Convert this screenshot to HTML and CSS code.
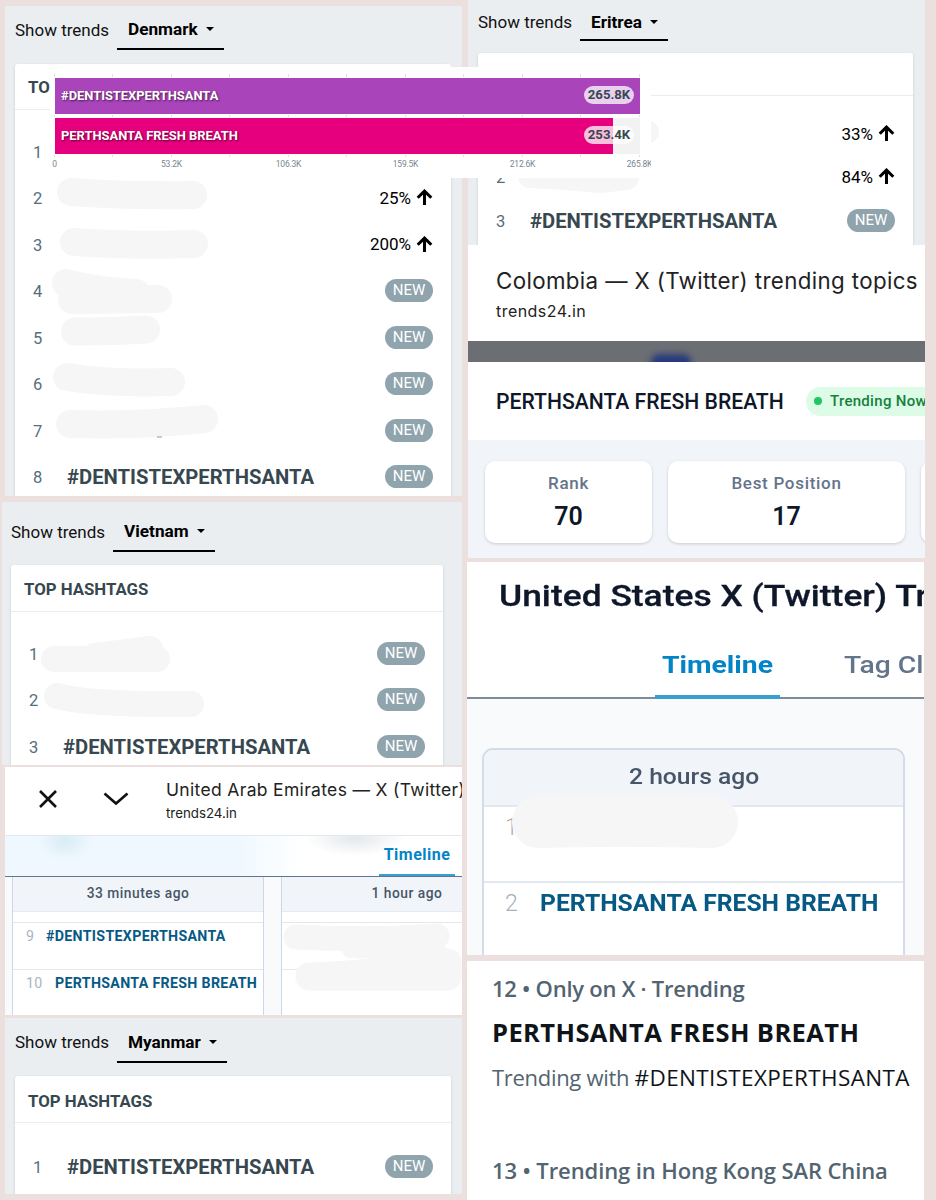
FILE: index.html
```html
<!DOCTYPE html>
<html>
    <head>
        <title>Trends</title>
        <meta charset="UTF-8">
        <meta name="viewport" content="width=device-width">
        <link rel="stylesheet" href="styles.css">
    </head>
    <body>
        <div class="board">
            <div class="left">

                <section class="panel denmark">
                    <div class="picker">
                        <span class="show">Show trends</span>
                        <span class="country">Denmark<i class="caret"></i></span>
                    </div>
                    <div class="card">
                        <h2>TO</h2>
                        <ul class="list">
                            <li><span class="num">1</span></li>
                            <li><span class="num">2</span><span class="pct">25%</span><svg class="arrow" viewBox="0 0 18 18"><path d="M9 17V2.500M1.800 9.300L9 2.200l7.200 7.100"/></svg></li>
                            <li><span class="num">3</span><span class="pct">200%</span><svg class="arrow" viewBox="0 0 18 18"><path d="M9 17V2.500M1.800 9.300L9 2.200l7.200 7.100"/></svg></li>
                            <li><span class="num">4</span><span class="new">NEW</span></li>
                            <li><span class="num">5</span><span class="new">NEW</span></li>
                            <li><span class="num">6</span><span class="new">NEW</span></li>
                            <li><span class="num">7</span><span class="new">NEW</span></li>
                            <li><span class="num">8</span><b class="tag">#DENTISTEXPERTHSANTA</b><span class="new">NEW</span></li>
                        </ul>
                    </div>
                    <svg class="smudge" viewBox="5 6 457 490">
                        <g stroke-width="28">
                            <path d="M71 192Q130 196 193 195"/>
                            <path d="M74 242Q130 246 194 244"/>
                            <path d="M66 283Q95 291 136 293"/>
                            <path d="M72 300L158 299"/>
                            <path d="M75 331.500Q110 332 146 329.500"/>
                            <path d="M67 377Q110 384 171 382"/>
                            <path d="M70 424Q140 426 204 419"/>
                        </g>
                        <path class="speck" d="M157 437h5"/>
                    </svg>
                </section>

                <section class="panel vietnam">
                    <div class="picker">
                        <span class="show">Show trends</span>
                        <span class="country">Vietnam<i class="caret"></i></span>
                    </div>
                    <div class="card">
                        <h2>TOP HASHTAGS</h2>
                        <ul class="list">
                            <li><span class="num">1</span><span class="new">NEW</span></li>
                            <li><span class="num">2</span><span class="new">NEW</span></li>
                            <li><span class="num">3</span><b class="tag">#DENTISTEXPERTHSANTA</b><span class="new">NEW</span></li>
                        </ul>
                    </div>
                    <svg class="smudge" viewBox="2 502 460 263">
                        <g stroke-width="26">
                            <path d="M54 659L157 659"/>
                            <path d="M95 656Q120 653 150 649"/>
                            <path d="M57 696Q90 705 191 704"/>
                        </g>
                    </svg>
                </section>

                <section class="panel emirates">
                    <div class="webbar">
                        <svg class="close" viewBox="0 0 20 20"><path d="M2 2l16 16M18 2L2 18"/></svg>
                        <svg class="down" viewBox="0 0 26 14"><path d="M1.500 1.500L13 11.500L24.500 1.500"/></svg>
                        <div>
                            <div class="title">United Arab Emirates — X (Twitter)</div>
                            <div class="host">trends24.in</div>
                        </div>
                    </div>
                    <div class="tabs"><span class="tab active">Timeline</span></div>
                    <div class="hours">
                        <div class="hour">
                            <h3>33 minutes ago</h3>
                            <div class="gap"></div>
                            <div class="trend"><span>9</span><b>#DENTISTEXPERTHSANTA</b></div>
                            <div class="trend"><span class="n10">10</span><b>PERTHSANTA FRESH BREATH</b></div>
                        </div>
                        <div class="hour">
                            <h3>1 hour ago</h3>
                            <div class="gap"></div>
                            <div class="trend"></div>
                            <div class="trend"></div>
                        </div>
                    </div>
                    <svg class="smudge" viewBox="5 767 457 248">
                        <path stroke-width="25" d="M296 937Q370 941 437 936"/>
                        <path stroke-width="27" d="M309 976Q370 974 448 962L448 977L309 977"/>
                        <path stroke-width="16" d="M350 950L440 953"/>
                    </svg>
                </section>

                <section class="panel myanmar">
                    <div class="picker">
                        <span class="show">Show trends</span>
                        <span class="country">Myanmar<i class="caret"></i></span>
                    </div>
                    <div class="card">
                        <h2>TOP HASHTAGS</h2>
                        <ul class="list">
                            <li><span class="num">1</span><b class="tag">#DENTISTEXPERTHSANTA</b><span class="new">NEW</span></li>
                        </ul>
                    </div>
                </section>
            </div>

            <div class="right">

                <section class="panel eritrea">
                    <div class="picker">
                        <span class="show">Show trends</span>
                        <span class="country">Eritrea<i class="caret"></i></span>
                    </div>
                    <div class="card">
                        <h2></h2>
                        <ul class="list">
                            <li><span class="num"></span><span class="pct">33%</span><svg class="arrow" viewBox="0 0 18 18"><path d="M9 17V2.500M1.800 9.300L9 2.200l7.200 7.100"/></svg></li>
                            <li><span class="num">2</span><span class="pct">84%</span><svg class="arrow" viewBox="0 0 18 18"><path d="M9 17V2.500M1.800 9.300L9 2.200l7.200 7.100"/></svg></li>
                            <li><span class="num">3</span><b class="tag">#DENTISTEXPERTHSANTA</b><span class="new">NEW</span></li>
                        </ul>
                    </div>
                    <svg class="smudge" viewBox="468 0 457 245">
                        <path stroke-width="24" d="M530 176Q560 177 600 181L627 178"/>
                        <path stroke-width="22" d="M630 132L648 132"/>
                    </svg>
                </section>

                <section class="panel colombia">
                    <div class="site">
                        <div class="title">Colombia — X (Twitter) trending topics</div>
                        <div class="host">trends24.in</div>
                    </div>
                    <div class="shade"><i></i></div>
                    <div class="topic">
                        <b>PERTHSANTA FRESH BREATH</b>
                        <span class="live"><i></i><em>Trending Now</em></span>
                    </div>
                    <div class="stats">
                        <div class="stat rank"><span>Rank</span><b>70</b></div>
                        <div class="stat best"><span>Best Position</span><b>17</b></div>
                        <div class="stat more"></div>
                    </div>
                </section>

                <section class="panel states">
                    <h1><span>United States X (Twitter) Tr</span></h1>
                    <div class="tabs">
                        <span class="tab active"><span>Timeline</span></span>
                        <span class="tab cloud"><span>Tag Cl</span></span>
                    </div>
                    <div class="timeline">
                        <div class="hour">
                            <h3><span>2 hours ago</span></h3>
                            <div class="trend"><i>1</i></div>
                            <div class="trend"><i>2</i><b>PERTHSANTA FRESH BREATH</b></div>
                        </div>
                    </div>
                    <svg class="smudge" viewBox="467 562 457 393">
                        <path stroke-width="52" d="M538 822Q620 820 712 822"/>
                    </svg>
                </section>

                <section class="panel explore">
                    <p class="meta m1">12 • Only on X · Trending</p>
                    <p class="name">PERTHSANTA FRESH BREATH</p>
                    <p class="with">Trending with <a>#DENTISTEXPERTHSANTA</a></p>
                    <p class="meta m2">13 • Trending in Hong Kong SAR China</p>
                </section>
            </div>

            <!-- volume chart, pasted over both columns -->
            <div class="chart">
                <div class="plot">
                    <div class="bar purple"><span>#DENTISTEXPERTHSANTA</span><em>265.8K</em></div>
                    <div class="bar pink"><span>PERTHSANTA FRESH BREATH</span><em>253.4K</em></div>
                </div>
                <div class="axis"><span>0</span><span>53.2K</span><span>106.3K</span><span>159.5K</span><span>212.6K</span><span>265.8K</span></div>
            </div>
        </div>
    </body>
</html>
```
FILE: styles.css
```css
*
{
    box-sizing: border-box;
}
body
{
    margin: 0;
    background: #ece0de;
    font-family: Roboto, "Liberation Sans", sans-serif;
    color: #111;
}
h1, h2, h3, p, ul
{
    margin: 0;
    padding: 0;
}
.board
{
    position: relative;
    width: 936px;
    height: 1200px;
    overflow: hidden;
    display: flex;
    gap: 5px;
}
.left
{
    width: 462px;
    padding: 6px 0 0 5px;
}
.right
{
    width: 458px;
}
.panel
{
    position: relative;
    overflow: hidden;
    white-space: nowrap;
}
.smudge
{
    position: absolute;
    left: 0;
    top: 0;
    width: 100%;
    height: 100%;
    fill: none;
    stroke: #f6f6f6;
    stroke-linecap: round;
    stroke-linejoin: round;
}
.smudge .speck
{
    stroke: #9a9a9a;
    stroke-width: 1;
    stroke-linecap: butt;
}

/* country picker + card */
.denmark, .vietnam, .myanmar, .eritrea
{
    background: #eaeef1;
    padding-left: 10px;
}
.denmark
{
    height: 490px;
}
.vietnam
{
    height: 263px;
    margin: 6px 0 0 -3px;
    padding-left: 9px;
}
.myanmar
{
    height: 176px;
    margin-top: 3px;
}
.eritrea
{
    height: 245px;
    margin-left: 1px;
}
.picker
{
    display: flex;
    height: 58px;
}
.show
{
    width: 102px;
    padding-top: 13px;
    font-size: 17px;
    line-height: 22px;
}
.country
{
    height: 44px;
    padding: 12px 10px 0 11px;
    border-bottom: 2px solid #000;
    font-size: 17.200px;
    font-weight: 700;
    line-height: 22px;
    color: #000;
}
.caret
{
    display: inline-block;
    margin-left: 8px;
    vertical-align: 4px;
    border: 4.500px solid transparent;
    border-top: 4px solid #000;
    border-bottom: 0;
}
.card
{
    width: 436px;
    height: 440px;
    background: #fff;
    border-radius: 3px;
    box-shadow: 0 1px 3px rgba(60, 80, 100, .2);
}
.card h2
{
    height: 46px;
    padding-left: 13px;
    border-bottom: 1px solid #e9edef;
    font-size: 16.800px;
    font-weight: 700;
    line-height: 47px;
    color: #37474f;
}
.list
{
    padding: 18px 18px 0;
    list-style: none;
}
.list li
{
    display: flex;
    align-items: center;
    height: 46.500px;
}
.num
{
    width: 34px;
    margin-right: auto;
    padding-top: 2px;
    font-size: 16.500px;
    color: #546e7a;
}
.tag
{
    margin-right: auto;
    padding-top: 1px;
    font-size: 20.250px;
    color: #37474f;
}
.list li:has(.tag) .num
{
    margin-right: 0;
}
.pct
{
    margin-right: 5px;
    font-size: 17px;
    color: #000;
}
.arrow
{
    width: 17px;
    height: 17px;
    fill: none;
    stroke: #000;
    stroke-width: 3.200;
}
.new
{
    width: 48px;
    height: 23px;
    border-radius: 12px;
    background: #90a4ae;
    color: #fff;
    font-size: 15px;
    line-height: 23px;
    text-align: center;
}
.vietnam .picker
{
    height: 63px;
}
.vietnam .show
{
    padding-top: 19px;
}
.vietnam .country
{
    height: 50px;
    padding-top: 18px;
}
.vietnam .card
{
    width: 432px;
}
.vietnam .card h2, .myanmar .card h2
{
    height: 47px;
    line-height: 48px;
}
.myanmar .country
{
    height: 45px;
}
.myanmar .show, .myanmar .country
{
    padding-top: 13px;
}
.myanmar .card h2
{
    line-height: 50px;
}
.myanmar .list
{
    padding-top: 20px;
}
.eritrea .picker
{
    height: 53px;
}
.eritrea .show
{
    padding-top: 11px;
}
.eritrea .country
{
    height: 41px;
    padding-top: 11px;
}
.eritrea .card
{
    width: 435px;
}
.eritrea .card h2
{
    height: 43px;
}
.eritrea .list
{
    padding-top: 16px;
}
.eritrea .list li
{
    height: 43.300px;
}

/* browser bar */
.emirates
{
    height: 248px;
    margin-top: 2px;
    background: #f8fafc;
}
.webbar
{
    display: flex;
    height: 69px;
    border-bottom: 1px solid #e2e8ec;
    background: #fff;
    font-family: Inter, Roboto, sans-serif;
    color: #222;
}
.webbar svg
{
    fill: none;
    stroke: #111;
    stroke-width: 2.600;
    flex: none;
}
.close
{
    width: 20px;
    height: 20px;
    margin: 22px 0 0 33px;
}
.down
{
    width: 26px;
    height: 14px;
    margin: 25px 37px 0 45px;
}
.webbar .title
{
    padding-top: 11px;
    font-size: 17.500px;
    letter-spacing: .330px;
    line-height: 24px;
}
.webbar .host
{
    font-size: 13.300px;
    line-height: 22px;
}
.emirates .tabs
{
    display: flex;
    height: 41px;
    padding-left: 374px;
    border-bottom: 1px solid #64748b;
    background: radial-gradient(ellipse 28px 20px at 60px 5px, #d9ecf4, transparent), radial-gradient(ellipse 50px 18px at 350px 2px, #e3e8ec, transparent), linear-gradient(90deg, #f0f8ff 0, #eff8ff 230px, #fff 300px);
}
.tab.active
{
    flex: none;
    color: #0284c7;
    border-bottom: 2px solid #38a0d0;
    font-weight: 700;
}
.emirates .tab
{
    width: 76px;
    text-align: center;
    font-size: 16px;
    letter-spacing: .500px;
    line-height: 37px;
}
.hours
{
    display: flex;
    gap: 17px;
    padding-left: 7px;
}
.emirates .hour
{
    width: 252px;
    height: 140px;
    border: 1px solid #cbd8e5;
    border-width: 0 1px;
    background: #fff;
    flex: none;
}
.emirates h3
{
    height: 35px;
    background: #f1f5f9;
    border-bottom: 1px solid #e6ebf1;
    font-size: 13.800px;
    font-weight: 500;
    letter-spacing: .500px;
    line-height: 33px;
    text-align: center;
    color: #475569;
}
.gap
{
    height: 10px;
}
.emirates .trend
{
    display: flex;
    height: 46.500px;
    padding-left: 13px;
    border-top: 1px solid #e2e8f0;
    font-size: 14.200px;
    line-height: 26px;
    letter-spacing: .330px;
}
.emirates .trend span
{
    width: 20px;
    color: #a9b5c2;
}
.emirates .trend .n10
{
    width: 29px;
}
.trend b
{
    color: #075985;
    font-weight: 700;
}

/* detail sheet */
.colombia
{
    height: 313px;
    margin-left: 1px;
    background: #fff;
}
.site
{
    height: 96px;
    padding: 21px 0 0 28px;
    font-family: Inter, Roboto, sans-serif;
    color: #222;
}
.site .title
{
    font-size: 22.300px;
    letter-spacing: .370px;
    line-height: 30px;
}
.site .host
{
    padding-top: 1px;
    font-size: 16px;
    letter-spacing: .450px;
    line-height: 28px;
}
.shade
{
    height: 21px;
    overflow: hidden;
    background: #6b6e73;
}
.shade i
{
    display: block;
    width: 40px;
    height: 30px;
    margin: 13px 0 0 183px;
    border-radius: 8px;
    background: #283a7c;
    filter: blur(3px);
}
.topic
{
    display: flex;
    align-items: center;
    height: 78px;
    padding-left: 28px;
}
.topic b
{
    flex: none;
    width: 310px;
    font-size: 21.150px;
    font-weight: 500;
    color: #0f172a;
}
.live
{
    display: flex;
    align-items: center;
    flex: none;
    width: 140px;
    height: 29px;
    padding-left: 8px;
    border-radius: 15px;
    background: #dcfce7;
    color: #15803d;
    font-size: 15px;
    font-weight: 500;
    letter-spacing: .300px;
}
.live em
{
    font-style: normal;
}
.live i
{
    width: 8px;
    height: 8px;
    margin-right: 8px;
    border-radius: 4px;
    background: #22c55e;
}
.stats
{
    display: flex;
    gap: 16px;
    height: 118px;
    padding: 21px 0 0 17px;
    background: #f1f5f9;
}
.stat
{
    height: 82px;
    flex: none;
    border-radius: 10px;
    background: #fff;
    box-shadow: 0 1px 3px rgba(15, 23, 42, .18);
    text-align: center;
}
.stat span
{
    display: block;
    padding-top: 10px;
    color: #64748b;
    font-size: 17px;
    font-weight: 500;
    letter-spacing: .700px;
    line-height: 24px;
}
.stat b
{
    font-size: 25px;
    font-weight: 600;
    line-height: 44px;
    color: #0f172a;
}
.rank
{
    width: 167px;
}
.best
{
    width: 237px;
}
.more
{
    width: 100px;
}

/* wide timeline */
.states
{
    width: 457px;
    height: 393px;
    margin-top: 4px;
    background: #fff;
}
.states h1 span, .states .tab span, .states h3 span, .states .trend b
{
    display: inline-block;
    transform-origin: 0 50%;
    transform: scaleX(1.180);
}
.states h3 span
{
    transform: scaleX(1.120);
}
.states .trend b
{
    transform: scaleX(1.073);
}
.states h1
{
    height: 91px;
    padding: 14px 0 0 32px;
    font-size: 30px;
    font-weight: 500;
    line-height: 40px;
    color: #0f172a;
    -webkit-text-stroke: .300px #0f172a;
}
.states .tabs
{
    display: flex;
    height: 46px;
    padding-left: 188px;
    border-bottom: 2px solid #7d8c98;
}
.states .tab
{
    height: 46px;
    font-size: 24px;
    line-height: 24px;
}
.states .tab.active
{
    width: 125px;
    padding-left: 7px;
    border-bottom: 4px solid #38a0d0;
}
.states .cloud
{
    padding-left: 64px;
    color: #64748b;
    font-weight: 500;
}
.timeline
{
    height: 256px;
    padding: 49px 0 0 15px;
    background: #f8fafc;
}
.states .hour
{
    width: 423px;
    height: 230px;
    border: 2px solid #d3dce7;
    border-radius: 11px;
    background: #fff;
    overflow: hidden;
}
.states h3
{
    height: 57px;
    padding-left: 145px;
    border-bottom: 2px solid #e2e8f0;
    background: #f1f5f9;
    font-size: 22px;
    font-weight: 500;
    line-height: 54px;
    color: #475569;
}
.states .trend
{
    display: flex;
    height: 76px;
    padding-left: 21px;
    border-bottom: 2px solid #e2e8f0;
    font-size: 23px;
    line-height: 42px;
}
.states .trend i
{
    width: 35px;
    color: #a5afbb;
    font-style: normal;
    font-weight: 300;
}

/* explore list */
.explore
{
    width: 457px;
    height: 239px;
    margin-top: 6px;
    padding: 11px 0 0 25px;
    background: #fff;
    font-family: "Open Sans", "Noto Sans", sans-serif;
}
.meta
{
    font-size: 22px;
    font-weight: 600;
    letter-spacing: -.100px;
    line-height: 32px;
    color: #536471;
}
.m1
{
    letter-spacing: -.250px;
}
.name
{
    padding-top: 11px;
    font-size: 25.500px;
    font-weight: 700;
    letter-spacing: .400px;
    line-height: 34px;
    color: #0f1419;
}
.with
{
    padding-top: 12px;
    font-size: 22px;
    letter-spacing: -.300px;
    line-height: 32px;
    color: #536471;
}
.with a
{
    font-size: 22.500px;
    letter-spacing: .350px;
    color: #0f1419;
}
.m2
{
    padding-top: 60px;
}

/* bar chart */
.chart
{
    position: absolute;
    left: 50px;
    top: 67px;
    width: 601px;
    height: 111px;
    padding: 7px 0 0 4px;
    overflow: hidden;
    background: #fff;
}
.plot
{
    width: 587px;
    height: 83px;
    padding: 4px 0 0 1px;
    background: repeating-linear-gradient(90deg, #dde1e4 0, #dde1e4 1px, transparent 1px, transparent 58.500px);
}
.bar
{
    display: flex;
    align-items: center;
    justify-content: space-between;
    width: 585px;
    height: 36px;
    margin-bottom: 4px;
    padding: 0 6px 2px;
    color: #fff;
    font-size: 12.900px;
    font-weight: 700;
    text-shadow: 1px 1px 2px rgba(0, 0, 0, .6);
    box-shadow: 0 0 0 1px #fff;
}
.bar em
{
    width: 50px;
    height: 18px;
    border-radius: 9px;
    background: rgba(255, 255, 255, .75);
    color: #37474f;
    font-size: 13.200px;
    font-style: normal;
    line-height: 18px;
    text-align: center;
    text-shadow: none;
}
.purple
{
    background: #a944bb;
}
.pink
{
    background: linear-gradient(90deg, #e6007e 558px, #f2f2f3 558px);
}
.axis
{
    display: flex;
    width: 702px;
    margin-left: -58px;
}
.axis span
{
    width: 117px;
    flex: none;
    font-size: 8.500px;
    letter-spacing: -.200px;
    line-height: 15px;
    text-align: center;
    color: #78868e;
}
```
